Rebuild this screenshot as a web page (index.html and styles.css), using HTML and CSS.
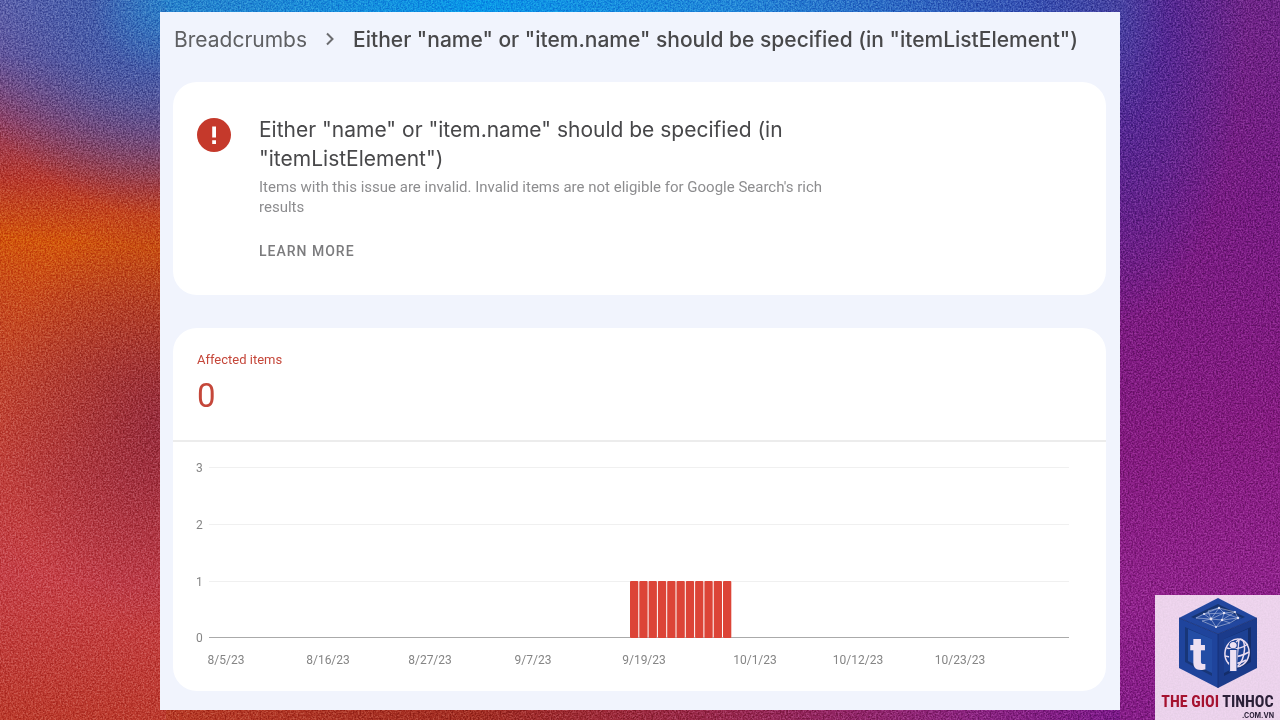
FILE: index.html
```
<!DOCTYPE html>
<html lang="en">

<head>
  <meta charset="UTF-8">
  <meta name="viewport" content="width=device-width, initial-scale=1.0">
  <title>Breadcrumbs</title>
  <link rel="stylesheet" href="styles.css">
</head>

<body>
  <svg class="grain" aria-hidden="true">
    <filter id="noise" x="0" y="0" width="100%" height="100%" color-interpolation-filters="sRGB">
      <feTurbulence type="fractalNoise" baseFrequency="0.6" numOctaves="2" seed="4" />
      <feColorMatrix values="2 0 0 0 -0.5  2 0 0 0 -0.5  2 0 0 0 -0.5  0 0 0 0 1" />
    </filter>
    <rect width="100%" height="100%" filter="url(#noise)" />
  </svg>

  <main class="panel">
    <nav class="breadcrumbs">
      <a href="#">Breadcrumbs</a>
      <svg class="chevron" viewBox="0 0 10 14" aria-hidden="true">
        <path d="M2 1.5 7.5 7 2 12.5" />
      </svg>
      <span class="current">Either "name" or "item.name" should be specified (in "itemListElement")</span>
    </nav>

    <section class="card issue">
      <svg class="error-icon" viewBox="0 0 34 34" aria-hidden="true">
        <circle cx="17" cy="17" r="17" />
        <path d="M15.2 8.5h3.8v11h-3.8zM15.2 22.3h3.8v3.8h-3.8z" />
      </svg>
      <div class="issue-text">
        <h1>Either "name" or "item.name" should be specified (in "itemListElement")</h1>
        <p>Items with this issue are invalid. Invalid items are not eligible for Google Search's rich results</p>
        <a class="learn-more" href="#">LEARN MORE</a>
      </div>
    </section>

    <section class="card affected">
      <div class="total">
        <h2>Affected items</h2>
        <p>0</p>
      </div>
      <svg class="chart" viewBox="0 0 933 249" role="img" aria-label="Affected items">
        <g class="gridlines">
          <path d="M36 25.5H896M36 82.5H896M36 139.5H896" />
        </g>
        <g class="axis">
          <text x="23" y="30">3</text>
          <text x="23" y="87">2</text>
          <text x="23" y="144">1</text>
          <text x="23" y="200">0</text>
        </g>
        <path class="baseline" d="M36 195.5H896" />
        <g class="bars">
          <rect x="457" y="139" width="8.3" height="57" rx="1" />
          <rect x="466.3" y="139" width="8.3" height="57" rx="1" />
          <rect x="475.6" y="139" width="8.3" height="57" rx="1" />
          <rect x="484.9" y="139" width="8.3" height="57" rx="1" />
          <rect x="494.2" y="139" width="8.3" height="57" rx="1" />
          <rect x="503.5" y="139" width="8.3" height="57" rx="1" />
          <rect x="512.8" y="139" width="8.3" height="57" rx="1" />
          <rect x="522.1" y="139" width="8.3" height="57" rx="1" />
          <rect x="531.4" y="139" width="8.3" height="57" rx="1" />
          <rect x="540.7" y="139" width="8.3" height="57" rx="1" />
          <rect x="550" y="139" width="8.3" height="57" rx="1" />
        </g>
        <g class="axis dates">
          <text x="53" y="222">8/5/23</text>
          <text x="155" y="222">8/16/23</text>
          <text x="257" y="222">8/27/23</text>
          <text x="360" y="222">9/7/23</text>
          <text x="471" y="222">9/19/23</text>
          <text x="582" y="222">10/1/23</text>
          <text x="685" y="222">10/12/23</text>
          <text x="787" y="222">10/23/23</text>
        </g>
      </svg>
    </section>
  </main>

  <div class="watermark">
    <svg class="cube" viewBox="0 0 80 92" aria-hidden="true">
      <path fill="#22479f" d="M40 1 79 21 40 37 1 21z" />
      <path fill="#1f449c" d="M1 21 40 37V91L1 71z" />
      <path fill="#1b3b8b" d="M79 21 40 37V91L79 71z" />
      <path fill="#17346f" d="M40 7 67 20 40 31 13 20z" />
      <path fill="#24499d" d="M40 10 64 21 40 31 16 21z" />
      <path fill="#183678" d="M7 30 34 42V79L7 65z" />
      <path fill="#234da5" d="M10 32 34 42V76L10 64z" />
      <path fill="#142d6a" d="M73 30 46 42V79L73 65z" />
      <path fill="#1d4194" d="M70 32 46 42V76L70 64z" />
      <path fill="none" stroke="#142f73" stroke-width=".8" d="M1 21 40 37 79 21M40 37V91" />
      <g class="mesh">
        <path d="M18 21 26 17 41 11 57 15 60 21 44 23 33 22 18 21M26 17 33 22 41 11 46 16 57 15M26 17 46 16 60 21M33 22 46 16 44 23 57 15M33 22 38 30 44 23 52 26 60 21M24 24 33 22M38 30 52 26M41 11 30 14 33 22M24 24 38 30" />
        <circle cx="26" cy="17" r="1" />
        <circle cx="41" cy="11" r="1.2" />
        <circle cx="46" cy="16" r="1.2" />
        <circle cx="33" cy="22" r="1.4" />
        <circle cx="44" cy="23" r="1.2" />
        <circle cx="57" cy="15" r="1" />
        <circle cx="60" cy="21" r="1.2" />
        <circle cx="38" cy="30" r="1" />
      </g>
      <g class="globe">
        <ellipse cx="59" cy="56" rx="12" ry="14" transform="rotate(12 59 56)" />
        <ellipse cx="60" cy="56" rx="6" ry="14" transform="rotate(12 60 56)" />
        <path d="M61 42 58 70M49 51Q60 54 70 47M47 59Q59 62 71 55M50 66Q60 68 68 63" />
      </g>
      <text class="letter" x="12" y="73">t</text>
      <text class="letter small" x="50" y="74">i</text>
    </svg>
    <div class="brand"><span>THE GIOI</span> TINHOC</div>
    <div class="domain">.COM.VN</div>
  </div>
</body>

</html>
```
FILE: styles.css
```
* {
  box-sizing: border-box;
}

html {
  min-height: 100%;
}

body {
  position: relative;
  display: flow-root;
  min-height: 100vh;
  margin: 0;
  font-family: Roboto, Arial, sans-serif;
  color: #48484a;
  background:
    radial-gradient(130% 30% at 100% 0, #2781cb 0, rgba(60, 92, 172, .8) 35%, rgba(80, 60, 140, 0) 100%) 0 0 / 13% 100% no-repeat,
    radial-gradient(100% 30% at 100% 58%, rgba(110, 20, 70, .5), rgba(110, 20, 70, 0)) 0 0 / 13% 100% no-repeat,
    linear-gradient(184deg, #6666b0 0, #6d5398 9%, #943f62 18%, #b8382c 26%, #d2540c 34%, #c84a1c 42%, #c0442c 52%, #c0403c 66%, #c64048 80%, #bc3a2c 100%) 0 0 / 13% 100% no-repeat,
    linear-gradient(to right, #2781cb, #0996e8 33%, #2086d8 60%, #3552b4 90%, #4540a0) 50% 0 / 75% 50% no-repeat,
    linear-gradient(to right, #b83a26, #a22c22 33%, #97264e 60%, #8a2280 85%, #7a1888) 50% 100% / 75% 50% no-repeat,
    radial-gradient(80% 75% at 0 0, #4545a5 0, rgba(76, 40, 150, .8) 40%, rgba(110, 20, 130, 0) 100%) 100% 0 / 13% 60% no-repeat,
    linear-gradient(170deg, #6c2488 0, #761a82 30%, #841a80 60%, #8e208a 80%, #821a86 100%) 100% 0 / 13% 100% no-repeat,
    #7a1888;
}

.grain {
  position: absolute;
  inset: 0;
  width: 100%;
  height: 100%;
  mix-blend-mode: soft-light;
  opacity: .5;
}

.panel {
  position: relative;
  width: 75%;
  margin: 12px auto 10px;
  padding: 0 14px 19px 13px;
  background: #f1f4fd;
}

.breadcrumbs {
  display: flex;
  align-items: center;
  gap: 18px;
  height: 54px;
  margin-bottom: 16px;
  padding-left: 1px;
  font-family: Inter, sans-serif;
  font-size: 21px;
  white-space: nowrap;
}

.breadcrumbs a {
  color: #5f6063;
  text-decoration: none;
}

.current {
  font-weight: 500;
}

.chevron {
  width: 10px;
  height: 14px;
  fill: none;
  stroke: #6b6c6f;
  stroke-width: 2;
}

.card {
  background: #fff;
  border-radius: 24px;
  overflow: hidden;
}

.issue {
  display: flex;
  gap: 28px;
  margin-bottom: 33px;
  padding: 33px 24px 34px;
}

.error-icon {
  flex: none;
  width: 34px;
  height: 34px;
  margin-top: 3px;
  fill: #c5392b;
}

.error-icon path {
  fill: #fff;
}

.issue-text {
  max-width: 600px;
}

h1 {
  margin: 0 0 4px;
  font-family: Inter, sans-serif;
  font-size: 21px;
  font-weight: 400;
  line-height: 29px;
}

.issue-text p {
  margin: 0 0 24px;
  font-size: 15px;
  line-height: 20px;
  color: #8d8d8f;
}

.learn-more {
  display: block;
  font-size: 14px;
  font-weight: 500;
  line-height: 20px;
  letter-spacing: 1px;
  color: #7b7b7d;
  text-decoration: none;
}

.total {
  padding: 24px 24px 25px;
  border-bottom: 2px solid #ececec;
  color: #c5473a;
}

.total h2 {
  margin: 0;
  font-size: 13px;
  font-weight: 400;
  line-height: 16px;
}

.total p {
  margin: 8px 0 0;
  font-size: 33px;
  line-height: 39px;
}

.chart {
  display: block;
  width: 100%;
}

.gridlines {
  stroke: #f0f0f0;
}

.baseline {
  stroke: #aaa;
}

.axis {
  font-size: 12px;
  fill: #858585;
}

.dates {
  text-anchor: middle;
}

.bars {
  fill: #dc4437;
}

.watermark {
  position: absolute;
  right: 0;
  bottom: 0;
  width: 125px;
  height: 125px;
  padding: 2px 6px 0;
  background: rgba(255, 245, 255, .84);
}

.cube {
  display: block;
  width: 80px;
  height: 92px;
  margin: 0 auto;
}

.mesh {
  fill: #e8e4f4;
}

.mesh path {
  fill: none;
  stroke: #b9c2e2;
  stroke-width: .6;
}

.globe {
  fill: none;
  stroke: #eadcf0;
  stroke-width: 1.5;
}

.letter {
  font-family: Roboto, sans-serif;
  font-size: 46px;
  font-weight: 900;
  fill: #eee0f2;
}

.letter.small {
  font-size: 38px;
  stroke: #1d4194;
  stroke-width: 2;
  paint-order: stroke;
}

.brand {
  padding-top: 3px;
  font-family: "Liberation Sans Narrow", "Roboto Condensed", Roboto, sans-serif;
  font-size: 16px;
  font-weight: 700;
  line-height: 20px;
  text-align: center;
  white-space: nowrap;
  color: #2b2038;
}

.brand span {
  color: #a51230;
}

.domain {
  font-family: Inter, sans-serif;
  font-size: 7px;
  font-weight: 700;
  line-height: 7px;
  text-align: right;
  color: #2b2038;
}
```
